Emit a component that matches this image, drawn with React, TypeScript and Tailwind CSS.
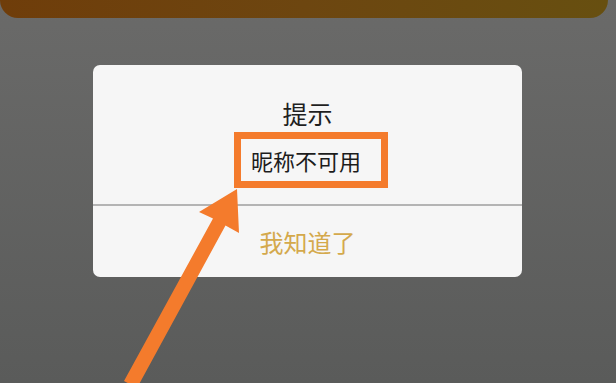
import React from 'react';

const cjk = { fontFamily: '"Noto Sans CJK SC", "Noto Sans", sans-serif' };

function Arrow() {
  // annotation arrow drawn over the dialog
  return (
    <svg
      className="pointer-events-none absolute left-0 top-0"
      width={616}
      height={383}
      viewBox="0 0 616 383"
    >
      <polygon
        points="237,189 239,233 225.5,225.5 137,388 124,381 213,218.5 199,212"
        fill="#f47b2c"
      />
    </svg>
  );
}

export default function App() {
  return (
    <div
      className="relative flex h-[383px] w-[616px] flex-col overflow-hidden bg-gradient-to-b from-[#6a6a69] to-[#5a5b5a]"
      style={cjk}
    >
      {/* top banner edge */}
      <div className="mr-[8px] h-[18px] shrink-0 rounded-b-[18px] bg-gradient-to-r from-[#6f3d0a] via-[#6d4610] to-[#674f10]" />

      {/* dialog */}
      <div className="ml-[93px] mt-[47px] flex h-[212px] w-[429px] flex-col rounded-[7px] bg-[#f6f6f6]">
        <div className="flex flex-col items-center pt-[33px]">
          <div className="text-[25px] leading-[30px] text-[#1f1f1f]">提示</div>
          <div className="mt-[4px] ml-[7px] flex h-[56px] w-[154px] items-center border-[7px] border-[#f47b2c] pl-[10px]">
            <span className="text-[22px] leading-[26px] text-[#1c1c1c]">昵称不可用</span>
          </div>
        </div>
        <div className="mt-[16px] h-[2px] w-full bg-[#b4b4b4]" />
        <div className="flex flex-1 items-center justify-center">
          <span className="text-[24px] leading-[28px] text-[#d4a94c]">我知道了</span>
        </div>
      </div>

      <Arrow />
    </div>
  );
}
